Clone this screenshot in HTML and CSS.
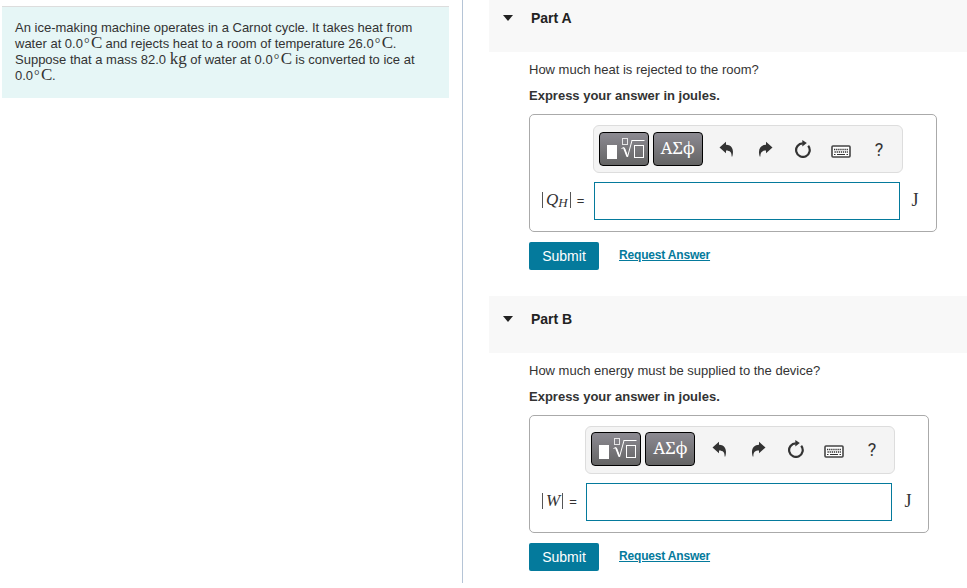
FILE: index.html
```html
<!DOCTYPE html>
<html lang="en">
<head>
    <meta charset="UTF-8" />
    <title>Carnot ice machine</title>
    <link rel="stylesheet" href="styles.css">
</head>
<body>
    <!-- shared icons -->
    <svg class="defs" width="0" height="0">
        <symbol id="template" viewBox="0 0 50 34">
            <rect x="8" y="13" width="10" height="14" fill="#fff"/>
            <g fill="none" stroke="#fff">
                <rect x="23.5" y="6.5" width="5" height="6" stroke-opacity=".8"/>
                <rect x="35.5" y="13.5" width="9" height="12"/>
                <path d="M32.5 8.5H45.5"/>
                <path d="M22.500 16.500L25 15.500L28.500 25L33 8.500"/>
                <path d="M25 16L28.300 24.500" stroke-width="1.800"/>
            </g>
        </symbol>
        <symbol id="arrow" viewBox="0 0 16 16">
            <path d="M.5 6.500L7 .700V3.800C12.500 3.800 15.500 8.500 13.300 15.500H12.600C12.800 11.500 11.200 9.500 7 9.500V12.300Z" fill="#333"/>
        </symbol>
        <symbol id="reset" viewBox="0 0 18 18">
            <path d="M14.200 5.800A6.800 6.800 0 1 1 8.800 3.300" fill="none" stroke="#333" stroke-width="2.200"/>
            <path d="M8.300 0L12.800 3L8.300 6.500Z" fill="#333"/>
        </symbol>
        <symbol id="keyboard" viewBox="0 0 20 13">
            <rect x="1" y="1" width="18" height="11" rx="1" fill="#fff" stroke="#444" stroke-width="1.600"/>
            <path d="M3 4.500H17" stroke="#333" stroke-width="1.400" stroke-dasharray="1.300 .8"/>
            <path d="M3.500 7H17" stroke="#333" stroke-width="1.400" stroke-dasharray="1.300 .8"/>
            <path d="M3 9.500H4.500M6 9.500H14M15.500 9.500H17" stroke="#333" stroke-width="1.200"/>
        </symbol>
    </svg>

    <div class="page">
        <aside>
            <div class="problem">
                An ice-making machine operates in a Carnot cycle. It takes heat from<br>
                water at 0.0<span class="deg">°</span><span class="unit">C</span> and rejects heat to a room of temperature 26.0<span class="deg">°</span><span class="unit">C</span>.<br>
                Suppose that a mass 82.0 <span class="kg">kg</span> of water at 0.0<span class="deg">°</span><span class="unit">C</span> is converted to ice at<br>
                0.0<span class="deg">°</span><span class="unit">C</span>.
            </div>
        </aside>

        <main>
            <section class="part">
                <h2><span class="caret"></span>Part A</h2>
                <div class="content">
                    <p>How much heat is rejected to the room?</p>
                    <p class="instructions">Express your answer in joules.</p>
                    <div class="answer">
                        <div class="label label-q"><span class="bar"></span><i>Q<sub>H</sub></i><span class="bar"></span><span class="eq">=</span></div>
                        <div class="editor">
                            <div class="toolbar">
                                <button class="tool"><svg width="50" height="34"><use href="#template"/></svg></button>
                                <button class="tool greek">ΑΣϕ</button>
                                <div class="icons">
                                    <span><svg width="16" height="16"><use href="#arrow"/></svg></span>
                                    <span><svg class="redo" width="16" height="16"><use href="#arrow"/></svg></span>
                                    <span><svg width="18" height="18"><use href="#reset"/></svg></span>
                                    <span><svg class="keys" width="20" height="13"><use href="#keyboard"/></svg></span>
                                    <span class="help">?</span>
                                </div>
                            </div>
                            <input type="text">
                        </div>
                        <div class="joule">J</div>
                    </div>
                    <div class="actions">
                        <button class="submit">Submit</button>
                        <a href="#">Request Answer</a>
                    </div>
                </div>
            </section>

            <section class="part">
                <h2><span class="caret"></span>Part B</h2>
                <div class="content">
                    <p>How much energy must be supplied to the device?</p>
                    <p class="instructions">Express your answer in joules.</p>
                    <div class="answer">
                        <div class="label label-w"><span class="bar"></span><i>W</i><span class="bar"></span><span class="eq">=</span></div>
                        <div class="editor">
                            <div class="toolbar">
                                <button class="tool"><svg width="50" height="34"><use href="#template"/></svg></button>
                                <button class="tool greek">ΑΣϕ</button>
                                <div class="icons">
                                    <span><svg width="16" height="16"><use href="#arrow"/></svg></span>
                                    <span><svg class="redo" width="16" height="16"><use href="#arrow"/></svg></span>
                                    <span><svg width="18" height="18"><use href="#reset"/></svg></span>
                                    <span><svg class="keys" width="20" height="13"><use href="#keyboard"/></svg></span>
                                    <span class="help">?</span>
                                </div>
                            </div>
                            <input type="text">
                        </div>
                        <div class="joule">J</div>
                    </div>
                    <div class="actions">
                        <button class="submit">Submit</button>
                        <a href="#">Request Answer</a>
                    </div>
                </div>
            </section>
        </main>
    </div>
</body>
</html>
```
FILE: styles.css
```css
* {
    box-sizing: border-box;
}

body {
    margin: 0;
    background: #fff;
    color: #333;
    font-family: "Liberation Sans", Arial, sans-serif;
    font-size: 13px;
    overflow: hidden;
}

.defs {
    display: block;
}

.page {
    display: flex;
    height: 583px;
}

aside {
    width: 463px;
    padding: 6px 13px 0 2px;
    border-right: 1px solid #b5c4d6;
}

.problem {
    height: 92px;
    padding: 13px 0 0 13px;
    border-top: 1px solid #ddd;
    background: #e6f6f6;
    line-height: 16px;
    white-space: nowrap;
}

.deg, .unit, .kg {
    display: inline-block;
    font-family: "Liberation Serif", serif;
    font-size: 17px;
    line-height: 12px;
}

.deg {
    width: 8px;
    padding-left: 1px;
    font-size: 14px;
}

.unit {
    width: 11px;
}

.kg {
    width: 17px;
}

main {
    flex: 1;
    padding-left: 26px;
}

.part {
    height: 301px;
}

.part:first-child {
    margin-top: -5px;
}

h2 {
    display: flex;
    align-items: center;
    height: 57px;
    margin: 0;
    padding: 0 0 11px 14px;
    background: #f8f8f8;
    color: #222;
    font-size: 14px;
}

.caret {
    margin-right: 18px;
    border: 5px solid transparent;
    border-top: 6px solid #222;
    border-bottom: 0;
}

.content {
    padding: 10px 0 0 40px;
}

p {
    margin: 0 0 10px;
    line-height: 16px;
}

.instructions {
    font-weight: bold;
}

.answer {
    display: flex;
    width: fit-content;
    height: 118px;
    padding: 10px 15px 0 11px;
    border: 1px solid #aaa;
    border-radius: 5px;
}

.label {
    display: flex;
    align-items: center;
    height: 20px;
    margin-top: 65px;
    font-family: "Liberation Serif", serif;
    font-size: 17px;
}

.label-q {
    width: 51.6px;
}

.label-w {
    width: 44.4px;
}

.label sub {
    font-size: 13px;
    line-height: 0;
    vertical-align: -2px;
}

.bar {
    width: 1px;
    height: 16px;
    margin: 0 3px 0 1px;
    background: #555;
}

.label i + .bar {
    margin: 0 2px;
}

.eq {
    margin-left: 4px;
    font-family: "Liberation Sans", sans-serif;
    font-size: 13px;
}

.editor {
    width: 310px;
}

.toolbar {
    display: flex;
    gap: 4px;
    height: 48px;
    padding: 6px 0 0 5px;
    border: 1px solid #ddd;
    border-radius: 6px;
    background: #f4f4f4;
}

.label-w + .editor .toolbar {
    padding-top: 5px;
}

.tool {
    width: 50px;
    height: 34px;
    padding: 0;
    border: 1px solid #000;
    border-radius: 4px;
    background: linear-gradient(#8c8a92, #646464);
    color: #fff;
    font-family: "Noto Serif", "DejaVu Serif", serif;
    font-size: 17px;
}

.tool svg {
    display: block;
    margin: -1px;
}

.greek {
    padding-bottom: 4px;
}

.icons {
    display: flex;
    margin-left: 1.5px;
}

.icons span {
    display: flex;
    align-items: center;
    justify-content: center;
    width: 38px;
    height: 34px;
}

.redo {
    transform: scaleX(-1);
}

.keys {
    margin-top: 4px;
}

.icons .help {
    font-family: Roboto, sans-serif;
    font-size: 18px;
}

input {
    display: block;
    width: 306px;
    height: 38px;
    margin: 9px 0 0 1px;
    border: 1px solid #047a9c;
    background: #fff;
}

.joule {
    width: 18px;
    margin-top: 65px;
    padding-left: 9px;
    font-family: "Liberation Serif", serif;
    font-size: 18px;
    line-height: 20px;
}

.actions {
    display: flex;
    margin-top: 10px;
}

.submit {
    width: 70px;
    height: 28px;
    padding: 0;
    border: 0;
    border-radius: 2px;
    background: #047a9c;
    color: #fff;
    font-family: inherit;
    font-size: 14px;
}

.actions a {
    margin: 6px 0 0 20px;
    color: #047a9c;
    font-size: 12px;
    font-weight: bold;
    letter-spacing: -0.18px;
}
```
